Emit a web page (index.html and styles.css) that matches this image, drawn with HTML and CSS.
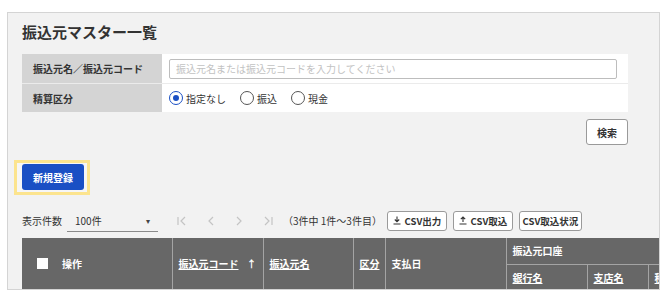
FILE: index.html
```html
<!DOCTYPE html>
<html lang="ja">
<head>
  <meta charset="UTF-8">
  <meta name="viewport" content="width=device-width, initial-scale=1.0">
  <title>振込元マスター一覧</title>
  <link rel="stylesheet" href="styles.css">
</head>
<body>
  <div class="panel">
    <h1>振込元マスター一覧</h1>

    <div class="search-form">
      <div class="form-row">
        <div class="form-label">振込元名／振込元コード</div>
        <div class="form-value">
          <input type="text" class="text-input" placeholder="振込元名または振込元コードを入力してください">
        </div>
      </div>
      <div class="form-row row-second">
        <div class="form-label">精算区分</div>
        <div class="form-value radios">
          <label class="radio"><span class="radio-dot checked"></span>指定なし</label>
          <label class="radio"><span class="radio-dot"></span>振込</label>
          <label class="radio"><span class="radio-dot"></span>現金</label>
        </div>
      </div>
    </div>

    <div class="search-actions">
      <button class="btn">検索</button>
    </div>

    <div class="new-area">
      <span class="focus-ring"><button class="btn-primary">新規登録</button></span>
    </div>

    <div class="toolbar">
      <span class="per-page-label">表示件数</span>
      <div class="select">
        <span>100件</span>
        <span class="caret">▾</span>
      </div>
      <div class="pager">
        <svg width="9" height="10" viewBox="0 0 9 10"><path d="M1 1v8M8 1L4 5l4 4" fill="none" stroke="#c4c4c4" stroke-width="1.2"/></svg>
        <svg width="6" height="10" viewBox="0 0 6 10"><path d="M5 1L1 5l4 4" fill="none" stroke="#c4c4c4" stroke-width="1.2"/></svg>
        <svg width="6" height="10" viewBox="0 0 6 10"><path d="M1 1l4 4-4 4" fill="none" stroke="#c4c4c4" stroke-width="1.2"/></svg>
        <svg width="9" height="10" viewBox="0 0 9 10"><path d="M1 1l4 4-4 4M8 1v8" fill="none" stroke="#c4c4c4" stroke-width="1.2"/></svg>
      </div>
      <span class="count">（3件中 1件～3件目）</span>
      <div class="csv-buttons">
        <button class="btn btn-small btn-csv-out">
          <svg width="8" height="9" viewBox="0 0 8 9"><path d="M4 0.5v5M1.8 3.5L4 5.7 6.2 3.5M0.5 8h7" fill="none" stroke="#333" stroke-width="1.1"/></svg>CSV出力
        </button>
        <button class="btn btn-small btn-csv-in">
          <svg width="8" height="9" viewBox="0 0 8 9"><path d="M4 6V1M1.8 3.2L4 1 6.2 3.2M0.5 8h7" fill="none" stroke="#333" stroke-width="1.1"/></svg>CSV取込
        </button>
        <button class="btn btn-small btn-csv-status">CSV取込状況</button>
      </div>
    </div>

    <table class="list-table">
      <colgroup>
        <col class="w-op">
        <col class="w-code">
        <col class="w-name">
        <col class="w-kind">
        <col class="w-date">
        <col class="w-bank">
        <col class="w-branch">
        <col class="w-type">
      </colgroup>
      <thead>
        <tr>
          <th rowspan="2" class="col-op"><span class="check"></span>操作</th>
          <th rowspan="2"><a>振込元コード</a><span class="sort">↑</span></th>
          <th rowspan="2"><a>振込元名</a></th>
          <th rowspan="2"><a>区分</a></th>
          <th rowspan="2">支払日</th>
          <th colspan="3">振込元口座</th>
        </tr>
        <tr>
          <th><a>銀行名</a></th>
          <th><a>支店名</a></th>
          <th><a>種別</a></th>
        </tr>
      </thead>
    </table>
  </div>
</body>
</html>
```

FILE: styles.css
```css
/* General styles */
* {
  margin: 0;
  padding: 0;
  box-sizing: border-box;
}

body {
  background-color: #fff;
  font-family: "Noto Sans CJK JP", "Noto Sans", sans-serif;
  color: #333;
}

/* Panel */
.panel {
  margin: 12px 0 0 7px;
  width: 653px;
  height: 278px;
  padding: 8px 0 0 14px;
  background-color: #f2f2f2;
  border: 1px solid #d4d4d4;
  overflow: hidden;
}

h1 {
  font-size: 15px;
  font-weight: bold;
  line-height: 22px;
  color: #333;
  margin-bottom: 11px;
}

/* Search form */
.search-form {
  width: 606px;
  background-color: #ebebeb;
}

.form-row {
  display: flex;
  height: 29px;
}

.row-second {
  height: 28px;
  margin-top: 1px;
}

.form-label {
  width: 140px;
  background-color: #d4d4d4;
  padding-left: 11px;
  display: flex;
  align-items: center;
  font-size: 10px;
  font-weight: bold;
  color: #333;
}

.form-value {
  flex: 1;
  background-color: #fff;
  display: flex;
  align-items: center;
  padding-left: 7px;
}

.text-input {
  width: 448px;
  height: 20px;
  border: 1px solid #bdbdbd;
  border-radius: 2px;
  padding: 0 6px;
  font-family: inherit;
  font-size: 10px;
}

.text-input::placeholder {
  color: #c2c2c2;
}

.radios {
  gap: 14px;
}

.radio {
  display: flex;
  align-items: center;
  gap: 3px;
  font-size: 10px;
  color: #333;
}

.radio-dot {
  width: 14px;
  height: 14px;
  border: 1px solid #555;
  border-radius: 50%;
  background-color: #fff;
  position: relative;
}

.radio-dot.checked {
  border: 1.5px solid #1a4fc4;
}

.radio-dot.checked::after {
  content: "";
  position: absolute;
  left: 2.5px;
  top: 2.5px;
  width: 6px;
  height: 6px;
  border-radius: 50%;
  background-color: #1a4fc4;
}

/* Buttons */
.search-actions {
  width: 606px;
  display: flex;
  justify-content: flex-end;
  margin-top: 7px;
}

.btn {
  height: 26px;
  width: 42px;
  background-color: #fff;
  border: 1px solid #9a9a9a;
  border-radius: 3px;
  font-family: inherit;
  font-size: 10px;
  font-weight: bold;
  color: #333;
}

.new-area {
  margin-top: 15px;
  margin-left: -8px;
}

.focus-ring {
  display: inline-block;
  border: 3px solid #fce48e;
  background-color: #f6f6f6;
  padding: 1px 3px 2px 5px;
}

.btn-primary {
  display: block;
  width: 62px;
  height: 26px;
  background-color: #1a4fc4;
  color: #fff;
  border: none;
  border-radius: 3px;
  font-family: inherit;
  font-size: 10px;
  font-weight: bold;
}

/* Toolbar */
.toolbar {
  display: flex;
  align-items: center;
  height: 23px;
  margin-top: 14px;
  font-size: 10px;
  color: #333;
}

.per-page-label {
  margin-right: 5px;
}

.select {
  width: 91px;
  height: 23px;
  border-bottom: 1px solid #8a8a8a;
  display: flex;
  align-items: center;
  justify-content: space-between;
  padding: 0 8px;
}

.caret {
  font-size: 8px;
  color: #444;
}

.pager {
  display: flex;
  align-items: center;
  gap: 22px;
  margin-left: 19px;
  margin-right: 10px;
}

.csv-buttons {
  display: flex;
  gap: 6px;
  margin-left: 5px;
}

.btn-small {
  height: 20px;
  width: auto;
  display: flex;
  align-items: center;
  justify-content: center;
  gap: 4px;
  font-size: 9.5px;
}

.btn-csv-out,
.btn-csv-in {
  width: 60px;
}

.btn-csv-status {
  width: 63px;
}

/* Table */
.list-table {
  margin-top: 6px;
  border-collapse: collapse;
  table-layout: fixed;
  width: 700px;
}

.w-op { width: 150px; }
.w-code { width: 91px; }
.w-name { width: 90px; }
.w-kind { width: 32px; }
.w-date { width: 121px; }
.w-bank { width: 81px; }
.w-branch { width: 61px; }
.w-type { width: 74px; }

.list-table th {
  background-color: #676767;
  color: #fff;
  font-size: 10px;
  font-weight: bold;
  text-align: left;
  padding: 0 6px;
  height: 26px;
  border: 1px solid #a4a4a4;
  border-top: none;
  white-space: nowrap;
  overflow: hidden;
}

.list-table th:first-child {
  border-left: none;
}

.list-table .col-op {
  padding-left: 15px;
}

.list-table a {
  color: #fff;
  text-decoration: underline;
}

.check {
  display: inline-block;
  width: 11px;
  height: 11px;
  background-color: #fff;
  vertical-align: -1px;
  margin-right: 14px;
}

.sort {
  margin-left: 8px;
  font-size: 10px;
}
```
